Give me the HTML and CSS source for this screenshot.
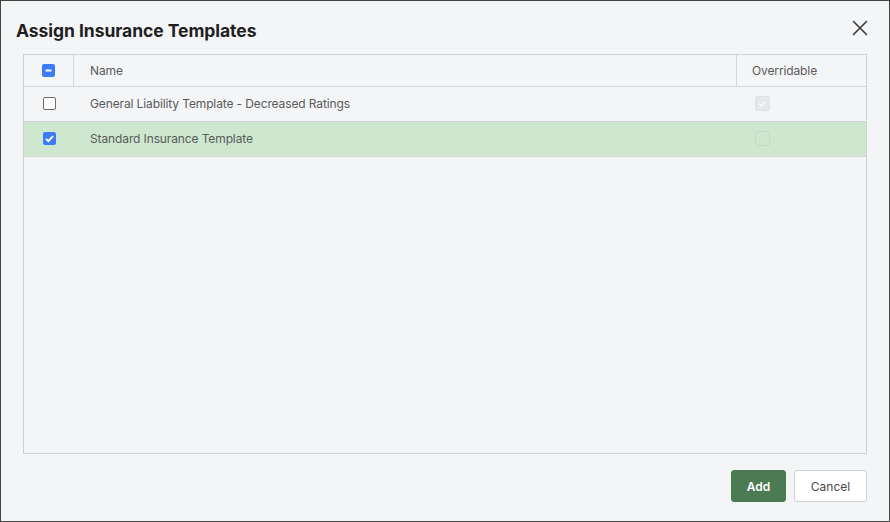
FILE: index.html
```html
<!DOCTYPE html>
<html>
<head>
<meta charset="utf-8">
<link rel="stylesheet" href="styles.css">
</head>
<body>
<div class="dialog">
  <div class="header">
    <h1 class="title">Assign Insurance Templates</h1>
    <button class="close" aria-label="Close">
      <svg width="16" height="16" viewBox="0 0 16 16"><path d="M1.5 1.5 L14.5 14.5 M14.5 1.5 L1.5 14.5" stroke="#3a3a3a" stroke-width="1.6" stroke-linecap="round"/></svg>
    </button>
  </div>
  <div class="table">
    <div class="row head">
      <div class="cell chk divider"><span class="cb cb-ind"><svg width="13" height="13" viewBox="0 0 13 13"><path d="M3.5 6.5 H9.5" stroke="#fff" stroke-width="2"/></svg></span></div>
      <div class="cell name">Name</div>
      <div class="cell over divider-l">Overridable</div>
    </div>
    <div class="row">
      <div class="cell chk"><span class="cb cb-empty"></span></div>
      <div class="cell name">General Liability Template - Decreased Ratings</div>
      <div class="cell over"><span class="cb cb-dis"><svg width="15" height="15" viewBox="0 0 15 15"><path d="M3.8 7.6 L6.3 10 L11.2 5" fill="none" stroke="#fff" stroke-width="1.4"/></svg></span></div>
    </div>
    <div class="row selected">
      <div class="cell chk"><span class="cb cb-on"><svg width="13" height="13" viewBox="0 0 13 13"><path d="M3 6.8 L5.4 9.2 L10 4.2" fill="none" stroke="#fff" stroke-width="1.9"/></svg></span></div>
      <div class="cell name">Standard Insurance Template</div>
      <div class="cell over"><span class="cb cb-dis-empty"></span></div>
    </div>
  </div>
  <div class="footer">
    <button class="btn primary">Add</button>
    <button class="btn secondary">Cancel</button>
  </div>
</div>
</body>
</html>
```
FILE: styles.css
```css
html, body {
  margin: 0;
  padding: 0;
}
body {
  width: 890px;
  height: 522px;
  font-family: Inter, "Noto Sans", sans-serif;
  background: #f4f5f7;
}
.dialog {
  box-sizing: border-box;
  width: 890px;
  height: 522px;
  border: 1px solid #444;
  background: #f4f5f7;
  display: flex;
  flex-direction: column;
  padding: 0 22px 19px 22px;
}
.header {
  display: flex;
  align-items: center;
  justify-content: space-between;
  height: 53px;
  margin-left: -7px;
}
.title {
  margin: 0;
  padding-top: 5px;
  font-size: 17.5px;
  font-weight: 700;
  color: #1f1f1f;
  letter-spacing: -0.05px;
}
.close {
  background: none;
  border: none;
  padding: 0;
  margin-right: -1px;
  width: 16px;
  height: 16px;
  display: flex;
  margin-top: 1px;
}
.table {
  flex: 1;
  border: 1px solid #cfd0d2;
  background: #f4f5f7;
  display: flex;
  flex-direction: column;
}
.row {
  display: flex;
  height: 34px;
  border-bottom: 1px solid #d4d5d7;
  align-items: stretch;
}
.row.head {
  height: 31px;
}
.row.selected {
  background: #cde8cf;
}
.cell {
  box-sizing: border-box;
  display: flex;
  align-items: center;
  font-size: 12px;
  color: #5a5a5a;
  letter-spacing: -0.12px;
}
.row:not(.head) .cell {
  padding-bottom: 1px;
}
.chk {
  width: 50px;
  justify-content: center;
}
.head .chk {
  width: 50px;
}
.divider {
  border-right: 1px solid #d4d5d7;
}
.name {
  flex: 1;
  padding-left: 16px;
}
.over {
  width: 130px;
  padding-left: 15px;
}
.divider-l {
  border-left: 1px solid #d4d5d7;
}
.row:not(.head) .over {
  padding-left: 19px;
}
.cb {
  box-sizing: border-box;
  width: 13px;
  height: 13px;
  border-radius: 2px;
  display: flex;
  align-items: center;
  justify-content: center;
}
.cb-ind {
  background: #3e7bf6;
}
.cb-on {
  background: #3e7bf6;
}
.cb-empty {
  border: 1px solid #6b6b6b;
  background: #fff;
  border-radius: 2px;
}
.cb-dis {
  width: 15px;
  height: 15px;
  background: #e6e7e9;
  border: 1px solid #e1e2e4;
}
.cb-dis-empty {
  width: 15px;
  height: 15px;
  border: 1px solid #c4dcc6;
  background: transparent;
}
.footer {
  display: flex;
  justify-content: flex-end;
  gap: 8px;
  padding-top: 16px;
}
.btn {
  height: 32px;
  border-radius: 3px;
  font-family: Inter, "Noto Sans", sans-serif;
  font-size: 12px;
  cursor: pointer;
}
.primary {
  width: 55px;
  background: #4b7a53;
  border: 1px solid #4b7a53;
  color: #fff;
  font-weight: 600;
}
.secondary {
  width: 73px;
  background: #fff;
  border: 1px solid #cfd0d2;
  color: #4a4a4a;
}
```
